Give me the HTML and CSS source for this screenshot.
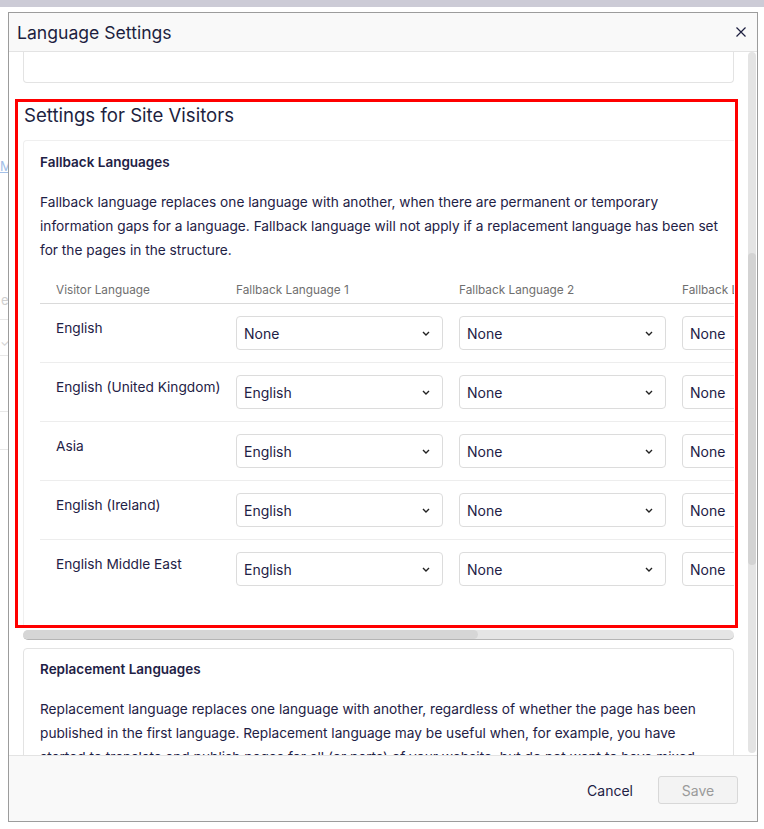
FILE: index.html
```html
<!DOCTYPE html>
<html lang="en">
<head>
    <meta charset="UTF-8">
    <meta name="viewport" content="width=device-width, initial-scale=1.0">
    <title>Language Settings</title>
    <link rel="stylesheet" href="styles.css">
</head>
<body>
    <!-- page behind the dialog -->
    <div class="page">
        <div class="topbar"></div>
        <div class="page-body">
            <a class="page-link" href="#">Ma</a>
            <div class="page-list">
                <div class="page-row row-a"><span class="page-muted">e</span></div>
                <div class="page-row row-b"><span class="page-check">&#10003;</span></div>
                <div class="page-row row-c"></div>
                <div class="page-row row-d"></div>
            </div>
        </div>
    </div>

    <div class="modal">
        <div class="modal-header">
            <h2>Language Settings</h2>
            <button class="close-btn" aria-label="Close">
                <svg width="10" height="10" viewBox="0 0 10 10">
                    <path d="M0.5 0.5 L9.5 9.5 M9.5 0.5 L0.5 9.5" stroke="#1d1f3f" stroke-width="1.2" fill="none"/>
                </svg>
            </button>
        </div>

        <div class="modal-body">
            <div class="body-content">
                <!-- end of the card above (scrolled out of view) -->
                <div class="card card-tail"></div>

                <!-- Settings for Site Visitors -->
                <section class="visitor-settings">
                    <h3>Settings for Site Visitors</h3>
                    <div class="fallback-card">
                        <div class="fallback-inner">
                            <h4>Fallback Languages</h4>
                            <p>Fallback language replaces one language with another, when there are permanent or temporary information gaps for a language. Fallback language will not apply if a replacement language has been set for the pages in the structure.</p>
                            <table class="fallback-table">
                                <colgroup>
                                    <col class="col-visitor">
                                    <col class="col-fallback">
                                    <col class="col-fallback">
                                    <col class="col-fallback">
                                    <col class="col-fallback">
                                </colgroup>
                                <thead>
                                    <tr>
                                        <th>Visitor Language</th>
                                        <th>Fallback Language 1</th>
                                        <th>Fallback Language 2</th>
                                        <th>Fallback Language 3</th>
                                        <th>Fallback Language 4</th>
                                    </tr>
                                </thead>
                                <tbody id="fallbackRows"></tbody>
                            </table>
                        </div>
                    </div>
                    <div class="h-scrollbar"><div class="h-thumb"></div></div>
                </section>

                <!-- Replacement Languages -->
                <div class="card replacement-card">
                    <h4>Replacement Languages</h4>
                    <p>Replacement language replaces one language with another, regardless of whether the page has been published in the first language. Replacement language may be useful when, for example, you have started to translate and publish pages for all (or parts) of your website, but do not want to have mixed</p>
                </div>
            </div>
            <div class="v-scrollbar"><div class="v-thumb"></div></div>
        </div>

        <div class="modal-footer">
            <button class="btn-link">Cancel</button>
            <button class="btn-save" disabled>Save</button>
        </div>
    </div>

    <script>
        // visitor language -> selected fallback languages
        const fallbackRows = [
            { name: 'English', values: ['None', 'None', 'None', 'None'] },
            { name: 'English (United Kingdom)', values: ['English', 'None', 'None', 'None'] },
            { name: 'Asia', values: ['English', 'None', 'None', 'None'] },
            { name: 'English (Ireland)', values: ['English', 'None', 'None', 'None'] },
            { name: 'English Middle East', values: ['English', 'None', 'None', 'None'] }
        ];

        const chevron = '<svg width="8" height="5" viewBox="0 0 8 5"><path d="M1 1 L4 4 L7 1" stroke="#222" stroke-width="1.4" fill="none"/></svg>';

        const tbody = document.getElementById('fallbackRows');
        fallbackRows.forEach(row => {
            const tr = document.createElement('tr');
            let html = `<td class="lang-name">${row.name}</td>`;
            row.values.forEach(v => {
                html += `<td><button class="select"><span>${v}</span>${chevron}</button></td>`;
            });
            tr.innerHTML = html;
            tbody.appendChild(tr);
        });
    </script>
</body>
</html>
```

FILE: styles.css
```css
* {
    margin: 0;
    padding: 0;
    box-sizing: border-box;
}

body {
    font-family: Inter, "Noto Sans", sans-serif;
    color: #1e2145;
    background: #fff;
    width: 764px;
    height: 829px;
    overflow: hidden;
}

/* page behind the dialog */
.topbar {
    height: 7px;
    background: #cccbd6;
}

.page-body {
    width: 8px;
    overflow: hidden;
    padding-top: 148px;
}

.page-link {
    color: #a3c0e8;
    font-size: 13px;
    line-height: 16px;
    text-decoration: underline;
    white-space: nowrap;
}

.page-list {
    margin-top: 109px;
}

.page-row {
    border-bottom: 1px solid #e8e8e8;
    font-size: 13px;
    color: #cfcfcf;
}

.row-a { height: 36px; padding-top: 8px; padding-left: 1px; }
.row-b { height: 36px; padding-top: 14px; }
.row-c { height: 56px; }
.row-d { height: 38px; }

.page-check {
    color: #d5d5d5;
}

/* dialog */
.modal {
    position: fixed;
    top: 12px;
    left: 8px;
    width: 750px;
    height: 810px;
    border: 1px solid #9c9c9c;
    background: #fff;
    display: flex;
    flex-direction: column;
}

.modal-header {
    height: 39px;
    flex-shrink: 0;
    background: #f9f9f9;
    border-bottom: 1px solid #e3e3e3;
    display: flex;
    align-items: center;
    justify-content: space-between;
    padding: 0 11px 0 8px;
}

.modal-header h2 {
    font-size: 17.6px;
    font-weight: 400;
    color: #1d1f3f;
}

.close-btn {
    background: none;
    border: none;
    width: 10px;
    height: 10px;
    display: flex;
    cursor: pointer;
}

.modal-body {
    flex: 1;
    min-height: 0;
    display: flex;
    overflow: hidden;
}

.body-content {
    flex: 1;
    min-width: 0;
    padding: 0 14px;
    overflow: hidden;
}

.v-scrollbar {
    width: 8px;
    flex-shrink: 0;
    margin: 0 1px 2px 0;
    padding-top: 201px;
    background: #e4e4e4;
    border-radius: 4px;
}

.v-thumb {
    height: 312px;
    background: #d3d3d3;
    border-radius: 4px;
}

.card {
    border: 1px solid #e3e3e3;
    border-radius: 4px;
}

.card-tail {
    height: 31px;
    border-top: none;
    border-radius: 0 0 4px 4px;
}

.card h4,
.fallback-inner h4 {
    font-size: 13.5px;
    font-weight: 600;
    line-height: 20px;
    margin-bottom: 18px;
}

.card p,
.fallback-inner p {
    font-size: 13.7px;
    line-height: 24px;
}

/* Settings for Site Visitors */
.visitor-settings {
    position: relative;
    margin-top: 20px;
}

/* red highlight drawn over the section */
.visitor-settings::after {
    content: "";
    position: absolute;
    top: -4px;
    left: -8px;
    right: -4px;
    bottom: 12px;
    border: 3px solid #ff0000;
    pointer-events: none;
}

.visitor-settings h3 {
    font-size: 18.6px;
    font-weight: 400;
    line-height: 24px;
    padding-left: 1px;
    margin-bottom: 13px;
    color: #1d1f3f;
}

.fallback-card {
    border: 1px solid #efefef;
    border-right: none;
    border-bottom: none;
    border-radius: 4px 0 0 0;
    overflow: hidden;
}

.fallback-inner {
    width: max-content;
    padding: 11px 16px 30px 16px;
}

.fallback-inner p {
    width: 684px;
}

.fallback-table {
    margin-top: 14px;
    border-collapse: collapse;
    table-layout: fixed;
    width: 1072px;
}

.col-visitor { width: 180px; }
.col-fallback { width: 223px; }

.fallback-table th {
    text-align: left;
    font-size: 11.8px;
    font-weight: 400;
    line-height: 16px;
    color: #6f6f6f;
    padding: 6px 16px 5px;
    white-space: nowrap;
    border-bottom: 1px solid #dadada;
}

.fallback-table td {
    padding: 12px 0 12px 16px;
    vertical-align: top;
    font-size: 13.7px;
    line-height: 24px;
    white-space: nowrap;
}

.fallback-table tbody tr {
    border-bottom: 1px solid #ededed;
}

.fallback-table tbody tr:last-child {
    border-bottom: none;
}

.select {
    width: 207px;
    height: 34px;
    display: flex;
    align-items: center;
    justify-content: space-between;
    padding: 0 12px 0 7px;
    background: #fff;
    border: 1px solid #dcdcdc;
    border-radius: 4px;
    font-family: inherit;
    font-size: 14px;
    color: #1e2145;
    cursor: pointer;
}

.h-scrollbar {
    margin-top: 2px;
    height: 10px;
    background: #e5e5e5;
    border-bottom: 1px solid #b5b5b5;
    border-radius: 5px;
    overflow: hidden;
}

.h-thumb {
    width: 455px;
    height: 100%;
    background: #d6d6d6;
    border-radius: 5px;
}

.replacement-card {
    margin-top: 8px;
    padding: 10px 16px 16px;
}

/* footer */
.modal-footer {
    height: 66px;
    flex-shrink: 0;
    background: #f9f9f9;
    border-top: 1px solid #e3e3e3;
    display: flex;
    justify-content: flex-end;
    align-items: flex-start;
    gap: 13px;
    padding: 20px 19px 0;
}

.btn-link {
    height: 28px;
    padding: 0 12px;
    background: none;
    border: none;
    font-family: inherit;
    font-size: 14px;
    color: #1e2145;
    cursor: pointer;
}

.btn-save {
    width: 80px;
    height: 28px;
    background: #f3f3f3;
    border: 1px solid #d8d8d8;
    border-radius: 3px;
    font-family: inherit;
    font-size: 14px;
    color: #9a9a9a;
}
```
